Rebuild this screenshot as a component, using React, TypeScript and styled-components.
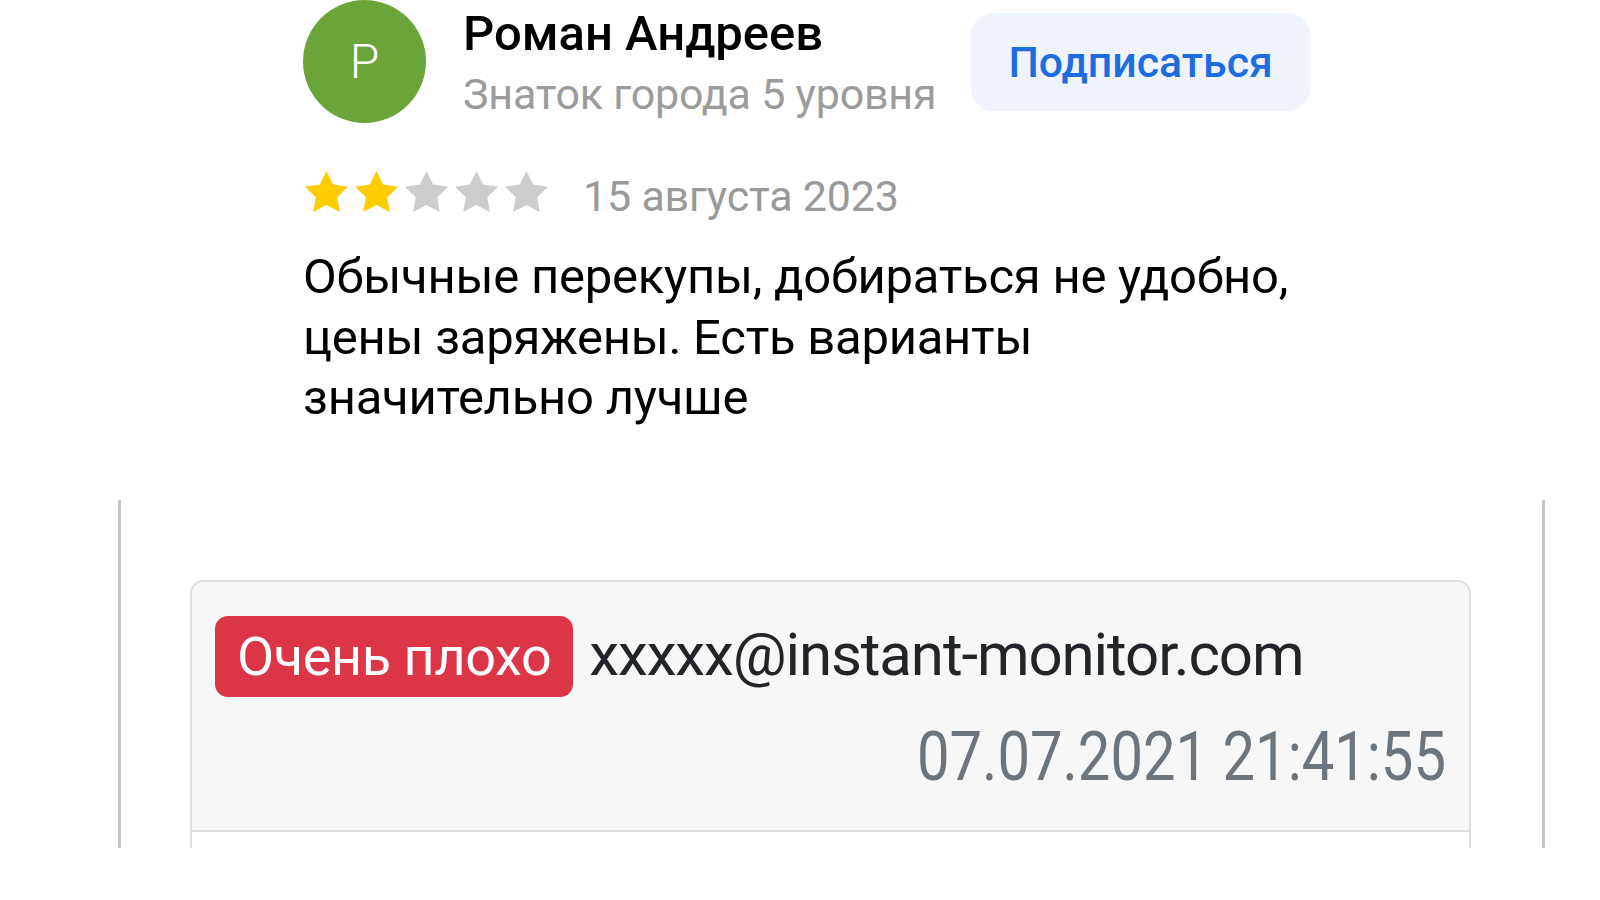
import { FC } from "react";
import styled, { createGlobalStyle } from "styled-components";

const GlobalStyle = createGlobalStyle`
  body {
    margin: 0;
    background: #fff;
    font-family: Roboto, "Liberation Sans", Arial, sans-serif;
  }
`;

const Page = styled.div`
  width: 1600px;
  height: 900px;
  overflow: hidden;
`;

const Review = styled.section`
  padding-left: 303px;
`;

const Header = styled.div`
  display: flex;
  align-items: center;
  height: 123px;
`;

const Avatar = styled.div`
  flex-shrink: 0;
  width: 123px;
  height: 123px;
  border-radius: 50%;
  background: #6ba53a;
  color: #fff;
  display: flex;
  align-items: center;
  justify-content: center;
  font-size: 48px;
  font-weight: 300;
`;

const Author = styled.div`
  align-self: flex-start;
  display: flex;
  flex-direction: column;
  gap: 2px;
  margin-left: 37px;
  padding-top: 5px;
`;

const Name = styled.div`
  font-size: 49px;
  line-height: 58px;
  font-weight: 500;
  color: #000;
`;

const Level = styled.div`
  font-size: 43px;
  line-height: 58px;
  letter-spacing: -0.2px;
  color: #9b9b9b;
`;

const SubscribeButton = styled.button`
  margin-left: 35px;
  height: 98px;
  padding: 0 37px;
  border: none;
  border-radius: 22px;
  background: #eef3fc;
  color: #1d6de0;
  font-family: Roboto, sans-serif;
  font-size: 42.8px;
  font-weight: 500;
  cursor: pointer;
`;

const Meta = styled.div`
  display: flex;
  align-items: flex-start;
  margin-top: 48px;
`;

const Stars = styled.div`
  display: flex;
  gap: 7px;
  margin-left: 2px;
`;

const DateText = styled.span`
  margin-left: 35px;
  font-size: 43px;
  line-height: 50px;
  letter-spacing: -0.2px;
  color: #999;
`;

const Body = styled.p`
  margin: 26px 0 0;
  white-space: pre-line;
  font-size: 49px;
  line-height: 60.5px;
  letter-spacing: -0.25px;
  color: #000;
`;

const Frame = styled.div`
  box-sizing: border-box;
  width: 1427px;
  height: 348px;
  margin: 71px 0 0 118px;
  padding: 80px 71px 0 69px;
  border-left: 3px solid #c6c6c6;
  border-right: 3px solid #c6c6c6;
  overflow: hidden;
`;

const Card = styled.div`
  min-height: 400px;
  border: 2px solid #dedede;
  border-radius: 14px 14px 0 0;
  background: #fff;
`;

const CardHeader = styled.div`
  padding: 34px 23px 33px;
  border-bottom: 2px solid #dedede;
  border-radius: 12px 12px 0 0;
  background: #f7f7f7;
`;

const Line = styled.div`
  display: flex;
  align-items: baseline;
  gap: 16px;
`;

const Badge = styled.span<{ $tone: string }>`
  padding: 8px 22px;
  border-radius: 13px;
  background: ${(p) => p.$tone};
  color: #fff;
  font-size: 54px;
  line-height: 65px;
  letter-spacing: -0.4px;
`;

const Email = styled.span`
  font-size: 60px;
  line-height: 65px;
  letter-spacing: -1.1px;
  color: #212529;
`;

/* the reference draws the date condensed: full height, narrower glyphs */
const Timestamp = styled.div`
  margin-top: 20px;
  text-align: right;
  font-size: 69px;
  line-height: 80px;
  color: #6c757d;
  transform: scaleX(0.84);
  transform-origin: right center;
`;

const Star: FC<{ on: boolean }> = ({ on }) => (
  <svg width="43" height="41" viewBox="2 2 20 19.02">
    <path
      d="M12 2l3.09 6.26L22 9.27l-5 4.87 1.18 6.88L12 17.77l-6.18 3.25L7 14.14 2 9.27l6.91-1.01L12 2z"
      fill={on ? "#fc0" : "#ccc"}
    />
  </svg>
);

const review = {
  author: "Роман Андреев",
  level: "Знаток города 5 уровня",
  rating: 2,
  date: "15 августа 2023",
  text: "Обычные перекупы, добираться не удобно,\nцены заряжены. Есть варианты\nзначительно лучше",
};

const App: FC = () => {
  return (
    <Page>
      <GlobalStyle />
      <Review>
        <Header>
          <Avatar>Р</Avatar>
          <Author>
            <Name>{review.author}</Name>
            <Level>{review.level}</Level>
          </Author>
          <SubscribeButton>Подписаться</SubscribeButton>
        </Header>
        <Meta>
          <Stars>
            {[1, 2, 3, 4, 5].map((n) => (
              <Star key={n} on={n <= review.rating} />
            ))}
          </Stars>
          <DateText>{review.date}</DateText>
        </Meta>
        <Body>{review.text}</Body>
      </Review>
      <Frame>
        <Card>
          <CardHeader>
            <Line>
              <Badge $tone="#dc3545">Очень плохо</Badge>
              <Email>xxxxx@instant-monitor.com</Email>
            </Line>
            <Timestamp>07.07.2021 21:41:55</Timestamp>
          </CardHeader>
        </Card>
      </Frame>
    </Page>
  );
};

export default App;
